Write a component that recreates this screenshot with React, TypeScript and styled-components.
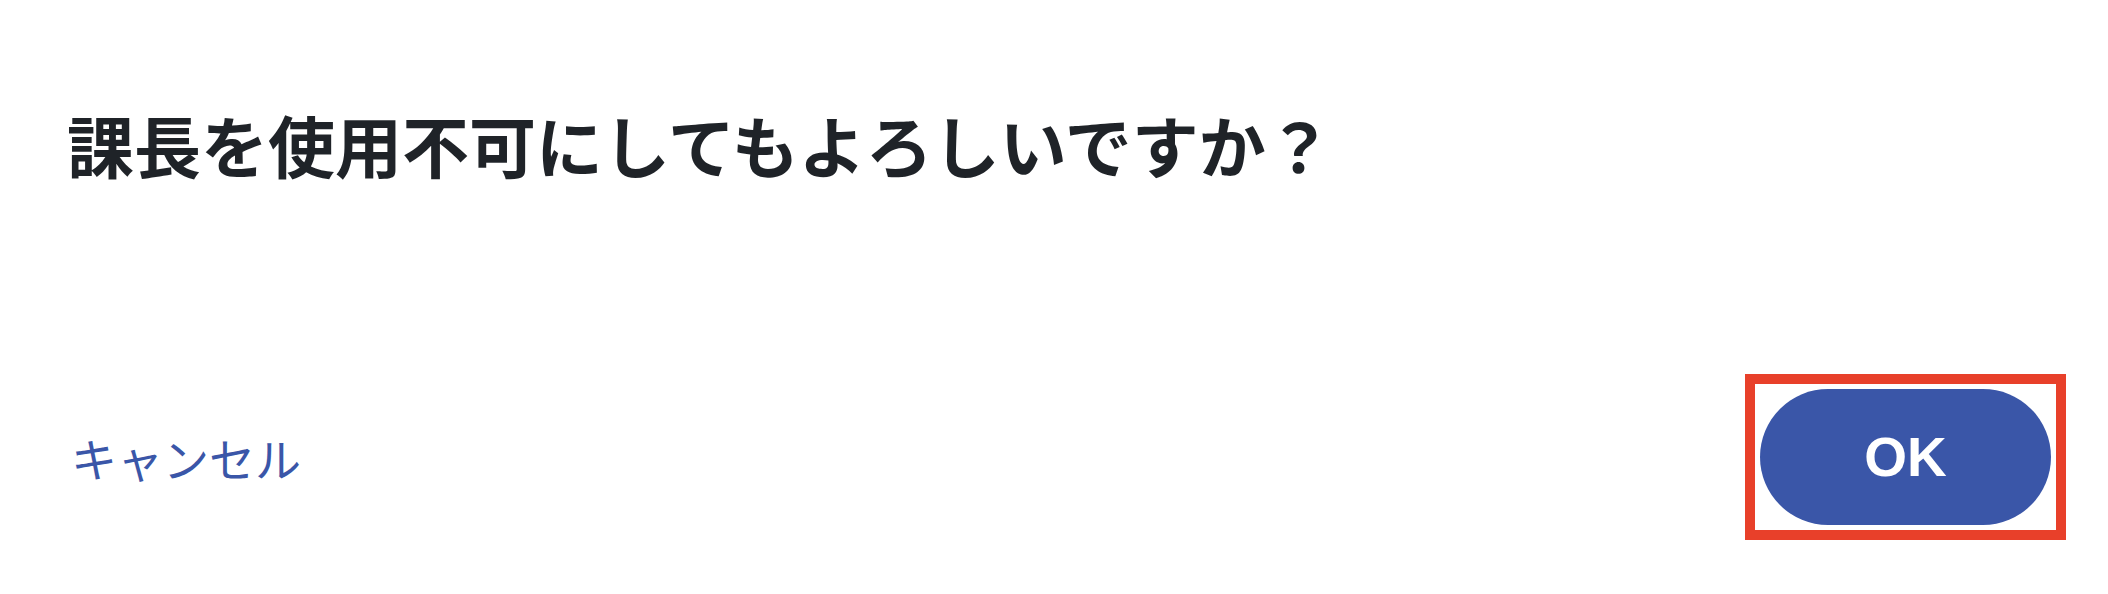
import React from "react";
import styled, { createGlobalStyle } from "styled-components";

const GlobalStyle = createGlobalStyle`
  html, body {
    margin: 0;
    padding: 0;
    background: #ffffff;
  }
  body {
    font-family: "Noto Sans CJK JP", "Noto Sans", sans-serif;
  }
`;

const Dialog = styled.div`
  box-sizing: border-box;
  width: 2108px;
  height: 594px;
  padding: 95px 42px 0 67px;
  display: flex;
  flex-direction: column;
  background: #ffffff;
`;

const Title = styled.h1`
  margin: 0;
  font-family: "Noto Sans CJK JP", "Noto Sans", sans-serif;
  font-size: 67px;
  font-weight: 700;
  line-height: 97px;
  color: #1f2328;
  letter-spacing: 0;
`;

const Footer = styled.div`
  margin-top: 182px;
  display: flex;
  align-items: center;
  justify-content: space-between;
`;

const CancelLink = styled.button`
  border: none;
  background: none;
  padding: 0;
  margin-left: 4px;
  font-family: "Noto Sans CJK JP", "Noto Sans", sans-serif;
  font-size: 46px;
  font-weight: 400;
  color: #3a56a8;
  cursor: pointer;
`;

const Highlight = styled.div`
  box-sizing: border-box;
  border: 10px solid #e8402a;
  padding: 5px;
  display: flex;
`;

const OkButton = styled.button`
  width: 291px;
  height: 136px;
  border: none;
  border-radius: 68px;
  background: #3a56a8;
  color: #ffffff;
  font-family: "Liberation Sans", Arial, sans-serif;
  font-size: 55px;
  font-weight: 700;
  display: flex;
  align-items: center;
  justify-content: center;
  cursor: pointer;
`;

export default function App() {
  return (
    <>
      <GlobalStyle />
      <Dialog>
        <Title>課長を使用不可にしてもよろしいですか？</Title>
        <Footer>
          <CancelLink>キャンセル</CancelLink>
          <Highlight>
            <OkButton>OK</OkButton>
          </Highlight>
        </Footer>
      </Dialog>
    </>
  );
}
